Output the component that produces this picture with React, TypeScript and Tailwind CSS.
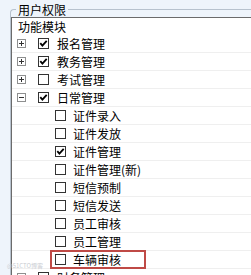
import React from "react";

type Node = {
  label: string;
  checked?: boolean;
  expander?: "plus" | "minus";
  child?: boolean;
  highlight?: boolean;
};

const rows: Node[] = [
  { label: "报名管理", checked: true, expander: "plus" },
  { label: "教务管理", checked: true, expander: "plus" },
  { label: "考试管理", expander: "plus" },
  { label: "日常管理", checked: true, expander: "minus" },
  { label: "证件录入", child: true },
  { label: "证件发放", child: true },
  { label: "证件管理", checked: true, child: true },
  { label: "证件管理(新)", child: true },
  { label: "短信预制", child: true },
  { label: "短信发送", child: true },
  { label: "员工审核", child: true },
  { label: "员工管理", child: true },
  { label: "车辆审核", child: true, highlight: true },
  { label: "财务管理", expander: "plus" },
];

function Expander({ kind }: { kind: "plus" | "minus" }) {
  return (
    <svg width="9" height="9" viewBox="0 0 9 9" className="shrink-0">
      <rect x="0.5" y="0.5" width="8" height="8" fill="#fff" stroke="#8e8f8f" />
      <path d="M2 4.5h5" stroke="#333" strokeWidth="1" />
      {kind === "plus" && <path d="M4.5 2v5" stroke="#333" strokeWidth="1" />}
    </svg>
  );
}

function CheckBox({ checked }: { checked?: boolean }) {
  return (
    <svg width="11" height="11" viewBox="0 0 11 11" className="shrink-0">
      <rect x="0.5" y="0.5" width="10" height="10" fill="#fff" stroke="#333" />
      {checked && (
        <path d="M2.3 5.2 L4.4 7.6 L8.7 2.8" fill="none" stroke="#000" strokeWidth="1.8" />
      )}
    </svg>
  );
}

function Row({ node }: { node: Node }) {
  const item = (
    <>
      <CheckBox checked={node.checked} />
      <span className={node.child ? "ml-[7px]" : "ml-[8px]"}>{node.label}</span>
    </>
  );

  return (
    <div className="flex h-[18px] shrink-0 items-center border-b border-[#efefef] whitespace-nowrap">
      {node.child ? (
        node.highlight ? (
          <div className="ml-[38px] flex h-[19px] w-[96px] items-center border-2 border-[#bf4a46] pl-[3px]">
            {item}
          </div>
        ) : (
          <div className="ml-[43px] flex items-center">{item}</div>
        )
      ) : (
        <div className="ml-[5px] flex items-center">
          <Expander kind={node.expander ?? "plus"} />
          <div className="ml-[12px] flex items-center">{item}</div>
        </div>
      )}
    </div>
  );
}

export default function App() {
  return (
    <div className="relative h-[275px] w-[251px] overflow-hidden bg-[#eef4fb] font-['Noto_Sans_CJK_SC',sans-serif] text-[12px] leading-[15px] text-black">
      <fieldset className="ml-[10px] mt-[2px] h-[300px] rounded-tl-[4px] border-l border-t border-[#b7c2ce]">
        <legend className="ml-[5px] px-[2px] leading-[15px]">用户权限</legend>
        <div className="flex h-full flex-col border-l border-t border-[#6b6b6b] bg-white">
          <div className="flex h-[17px] shrink-0 items-center pl-[6px]">功能模块</div>
          {rows.map((r) => (
            <Row key={r.label} node={r} />
          ))}
        </div>
      </fieldset>
      <span className="absolute left-[7px] top-[262px] text-[6px] leading-[7px] text-[#c9ccd2]">@51CTO博客</span>
    </div>
  );
}
